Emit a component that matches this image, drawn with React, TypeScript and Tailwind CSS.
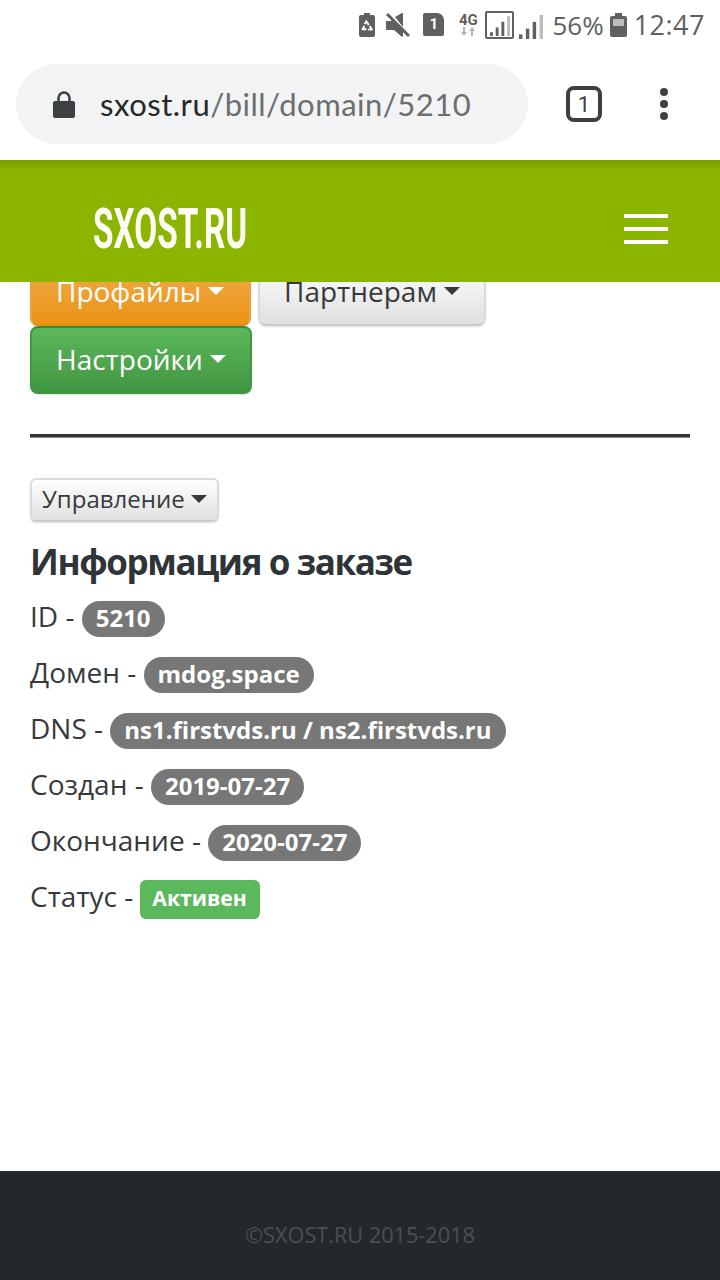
const openSans = 'font-["Open_Sans",sans-serif]';

function RecycleBattery() {
  return (
    <svg width="16" height="24" viewBox="0 0 16 24" className="text-[#606060]">
      <path d="M5 0h6v2h3a2 2 0 0 1 2 2v18a2 2 0 0 1-2 2H2a2 2 0 0 1-2-2V4a2 2 0 0 1 2-2h3z" fill="currentColor" />
      <path d="M8 7.5l2.6 4-1.7 1-1.4-2.4-.9 1.4-1.7-1 1.6-2.6a.9.9 0 0 1 1.5-.4zM4.6 12.4l1.7 1-1.1 1.9h2.3v2H3.6c-.8 0-1.3-.9-.9-1.6zM11.6 12.6l2 3.2c.4.7 0 1.6-.9 1.6H9.3v-2h1.9l-1.3-1.8z" fill="#fff" />
    </svg>
  );
}

function MuteIcon() {
  return (
    <svg width="24" height="24" viewBox="0 0 24 24" className="text-[#606060]">
      <path d="M0 8h5l1-1 11 11v5l-1 1-8-7H0z" fill="currentColor" />
      <path d="M9 4l7-4h1v14z" fill="currentColor" />
      <path d="M1 1l22 22" stroke="currentColor" strokeWidth="3" />
    </svg>
  );
}

function SimIcon() {
  return (
    <div className="flex h-[23px] w-[21px] items-center justify-center rounded-[2px] rounded-tr-[7px] bg-[#606060] font-['Roboto',sans-serif] text-[15px] font-bold text-white">
      1
    </div>
  );
}

function Bars({ size }: { size: number }) {
  const bars = [
    { x: 0, h: 4 },
    { x: 6, h: 9 },
    { x: 12, h: 15 },
    { x: 18, h: 21 },
  ];
  return (
    <svg width={size} height={size} viewBox="0 0 21 21">
      {bars.map((b, i) => (
        <rect key={b.x} x={b.x} y={21 - b.h} width="3" height={b.h} fill={i === 3 ? "#bdbdbd" : "#606060"} />
      ))}
    </svg>
  );
}

function StatusBar() {
  return (
    <div className="flex h-[48px] items-center justify-end pr-[15px] pt-[1px] text-[#606060]">
      <RecycleBattery />
      <div className="ml-[11px]">
        <MuteIcon />
      </div>
      <div className="ml-[13px]">
        <SimIcon />
      </div>
      <div className="ml-[14px] flex w-[20px] flex-col items-center font-['Roboto',sans-serif] text-[15px] font-bold leading-[14px]">
        4G
        <svg width="14" height="9" viewBox="0 0 14 9" className="text-[#b5b5b5]">
          <path d="M2 0h2v5h2L3 9 0 5h2zM10 9h2V4h2l-3-4-3 4h2z" fill="currentColor" />
        </svg>
      </div>
      <div className="ml-[7px] flex h-[28px] w-[29px] items-end justify-center rounded-[2px] border-2 border-[#606060] pb-[1px]">
        <Bars size={20} />
      </div>
      <div className="ml-[5px] pt-[4px]">
        <Bars size={24} />
      </div>
      <span className="ml-[9px] font-['Open_Sans',sans-serif] text-[26px] leading-none">56%</span>
      <div className="ml-[6px] flex h-[24px] w-[17px] flex-col">
        <div className="mx-auto h-[3px] w-[7px] bg-[#606060]" />
        <div className="flex-1 rounded-[2px] bg-[#606060] p-[3px] pb-[11px]">
          <div className="h-full bg-[#bdbdbd]" />
        </div>
      </div>
      <span className="ml-[7px] font-['Open_Sans',sans-serif] text-[27px] leading-none tracking-[0.5px]">12:47</span>
    </div>
  );
}

function UrlBar() {
  return (
    <div className="flex h-[112px] items-center pl-[16px]">
      <div className="flex h-[80px] w-[512px] items-center rounded-[40px] bg-[#f1f3f4] pl-[37px]">
        <svg width="22" height="27" viewBox="0 0 22 27" className="text-[#3c4043]">
          <path d="M2 10h18a2 2 0 0 1 2 2v13a2 2 0 0 1-2 2H2a2 2 0 0 1-2-2V12a2 2 0 0 1 2-2z" fill="currentColor" />
          <path d="M5.5 11V7a5.5 5.5 0 0 1 11 0v4" fill="none" stroke="currentColor" strokeWidth="2.5" />
        </svg>
        <span className="ml-[25px] font-['Lato',sans-serif] text-[31px] leading-none tracking-[0.5px] text-[#6b6e70]">
          <span className="text-[#26282a]">sxost.ru</span>/bill/domain/5210
        </span>
      </div>
      <div className="ml-[38px] flex h-[36px] w-[36px] items-center justify-center rounded-[8px] border-4 border-[#3c4043] font-['Roboto',sans-serif] text-[22px] text-[#3c4043]">
        1
      </div>
      <div className="ml-[58px] flex flex-col gap-[4px]">
        <div className="h-[8px] w-[8px] rounded-full bg-[#3c4043]" />
        <div className="h-[8px] w-[8px] rounded-full bg-[#3c4043]" />
        <div className="h-[8px] w-[8px] rounded-full bg-[#3c4043]" />
      </div>
    </div>
  );
}

function SiteHeader() {
  return (
    <header className="relative z-10 flex h-[122px] items-center justify-between bg-[linear-gradient(#7a9b00,#8cb500_10px)] pl-[93px] pr-[52px] pt-[16px]">
      <div className="w-[154px] origin-left scale-x-[0.605] whitespace-nowrap font-['Roboto',sans-serif] text-[55px] font-bold leading-none text-[#fdfdf5] blur-[0.5px]">
        SXOST.RU
      </div>
      <div className="flex w-[44px] flex-col gap-[9px]">
        <div className="h-[4px] bg-white" />
        <div className="h-[4px] bg-white" />
        <div className="h-[4px] bg-white" />
      </div>
    </header>
  );
}

function Caret() {
  return <span className="ml-[7px] inline-block border-x-[8px] border-t-[8px] border-x-transparent border-t-current align-middle" />;
}

function MenuButton({ label, className }: { label: string; className: string }) {
  return (
    <button className={`flex h-[68px] items-center rounded-[8px] border-2 px-[24px] pb-[2px] text-[28px] leading-none shadow-[0_1px_2px_rgba(0,0,0,0.12)] ${className}`}>
      {label}
      <Caret />
    </button>
  );
}

function Row({ label, children }: { label: string; children: React.ReactNode }) {
  return (
    <div className="flex h-[56px] items-center whitespace-pre text-[28px] leading-none text-[#373a3c]">
      <span className="pb-[6px]">{label} - </span>
      {children}
    </div>
  );
}

function Pill({ children }: { children: string }) {
  return (
    <span className="flex h-[36px] items-center rounded-[18px] bg-[#777777] px-[14px] pb-[2px] text-[24px] font-bold leading-none text-white">
      {children}
    </span>
  );
}

export default function App() {
  return (
    <div className={`flex h-[1280px] w-[720px] flex-col overflow-hidden bg-white ${openSans}`}>
      <StatusBar />
      <UrlBar />
      <SiteHeader />
      <main className="flex-1 px-[30px]">
        <div className="-mt-[24px] flex gap-[7px]">
          <MenuButton
            label="Профайлы"
            className="w-[221px] border-[#eea236] border-b-[#e38d13] bg-[linear-gradient(#f0ad4e,#eb9316)] text-white"
          />
          <MenuButton
            label="Партнерам"
            className="w-[228px] border-[#dbdbdb] border-b-[#cccccc] bg-[linear-gradient(#ffffff,#e0e0e0)] text-[#373a3c]"
          />
        </div>
        <MenuButton
          label="Настройки"
          className="w-[222px] border-[#419641] border-t-[#3e8f3e] bg-[linear-gradient(#5cb85c,#419641)] text-white"
        />
        <div className="mt-[40px] h-[4px] border-b border-[#8a8a8a] bg-[#33363a]" />
        <button className="mt-[40px] flex h-[44px] w-[189px] items-center rounded-[6px] border-2 border-[#dbdbdb] border-b-[#cccccc] bg-[linear-gradient(#ffffff,#e0e0e0)] pb-[2px] pl-[10px] text-[24px] leading-none text-[#373a3c] shadow-[0_1px_2px_rgba(0,0,0,0.12)]">
          Управление
          <span className="ml-[6px] inline-block border-x-[8px] border-t-[8px] border-x-transparent border-t-current" />
        </button>
        <h1 className="mt-[18px] text-[35px] font-bold leading-[44px] tracking-[-1.4px] text-[#2f3438]">
          Информация о заказе
        </h1>
        <div className="mt-[7px]">
          <Row label="ID"><Pill>5210</Pill></Row>
          <Row label="Домен"><Pill>mdog.space</Pill></Row>
          <Row label="DNS"><Pill>ns1.firstvds.ru / ns2.firstvds.ru</Pill></Row>
          <Row label="Создан"><Pill>2019-07-27</Pill></Row>
          <Row label="Окончание"><Pill>2020-07-27</Pill></Row>
          <Row label="Статус">
            <span className="-ml-[1px] flex h-[39px] w-[120px] items-center justify-center rounded-[6px] bg-[#5cb85c] pb-[3px] text-[21.2px] font-bold leading-none text-white">
              Активен
            </span>
          </Row>
        </div>
      </main>
      <footer className="flex h-[109px] items-center justify-center bg-[#25282b] pt-[20px] text-[21.7px] text-[#4c4f52]">
        ©SXOST.RU 2015-2018
      </footer>
    </div>
  );
}
